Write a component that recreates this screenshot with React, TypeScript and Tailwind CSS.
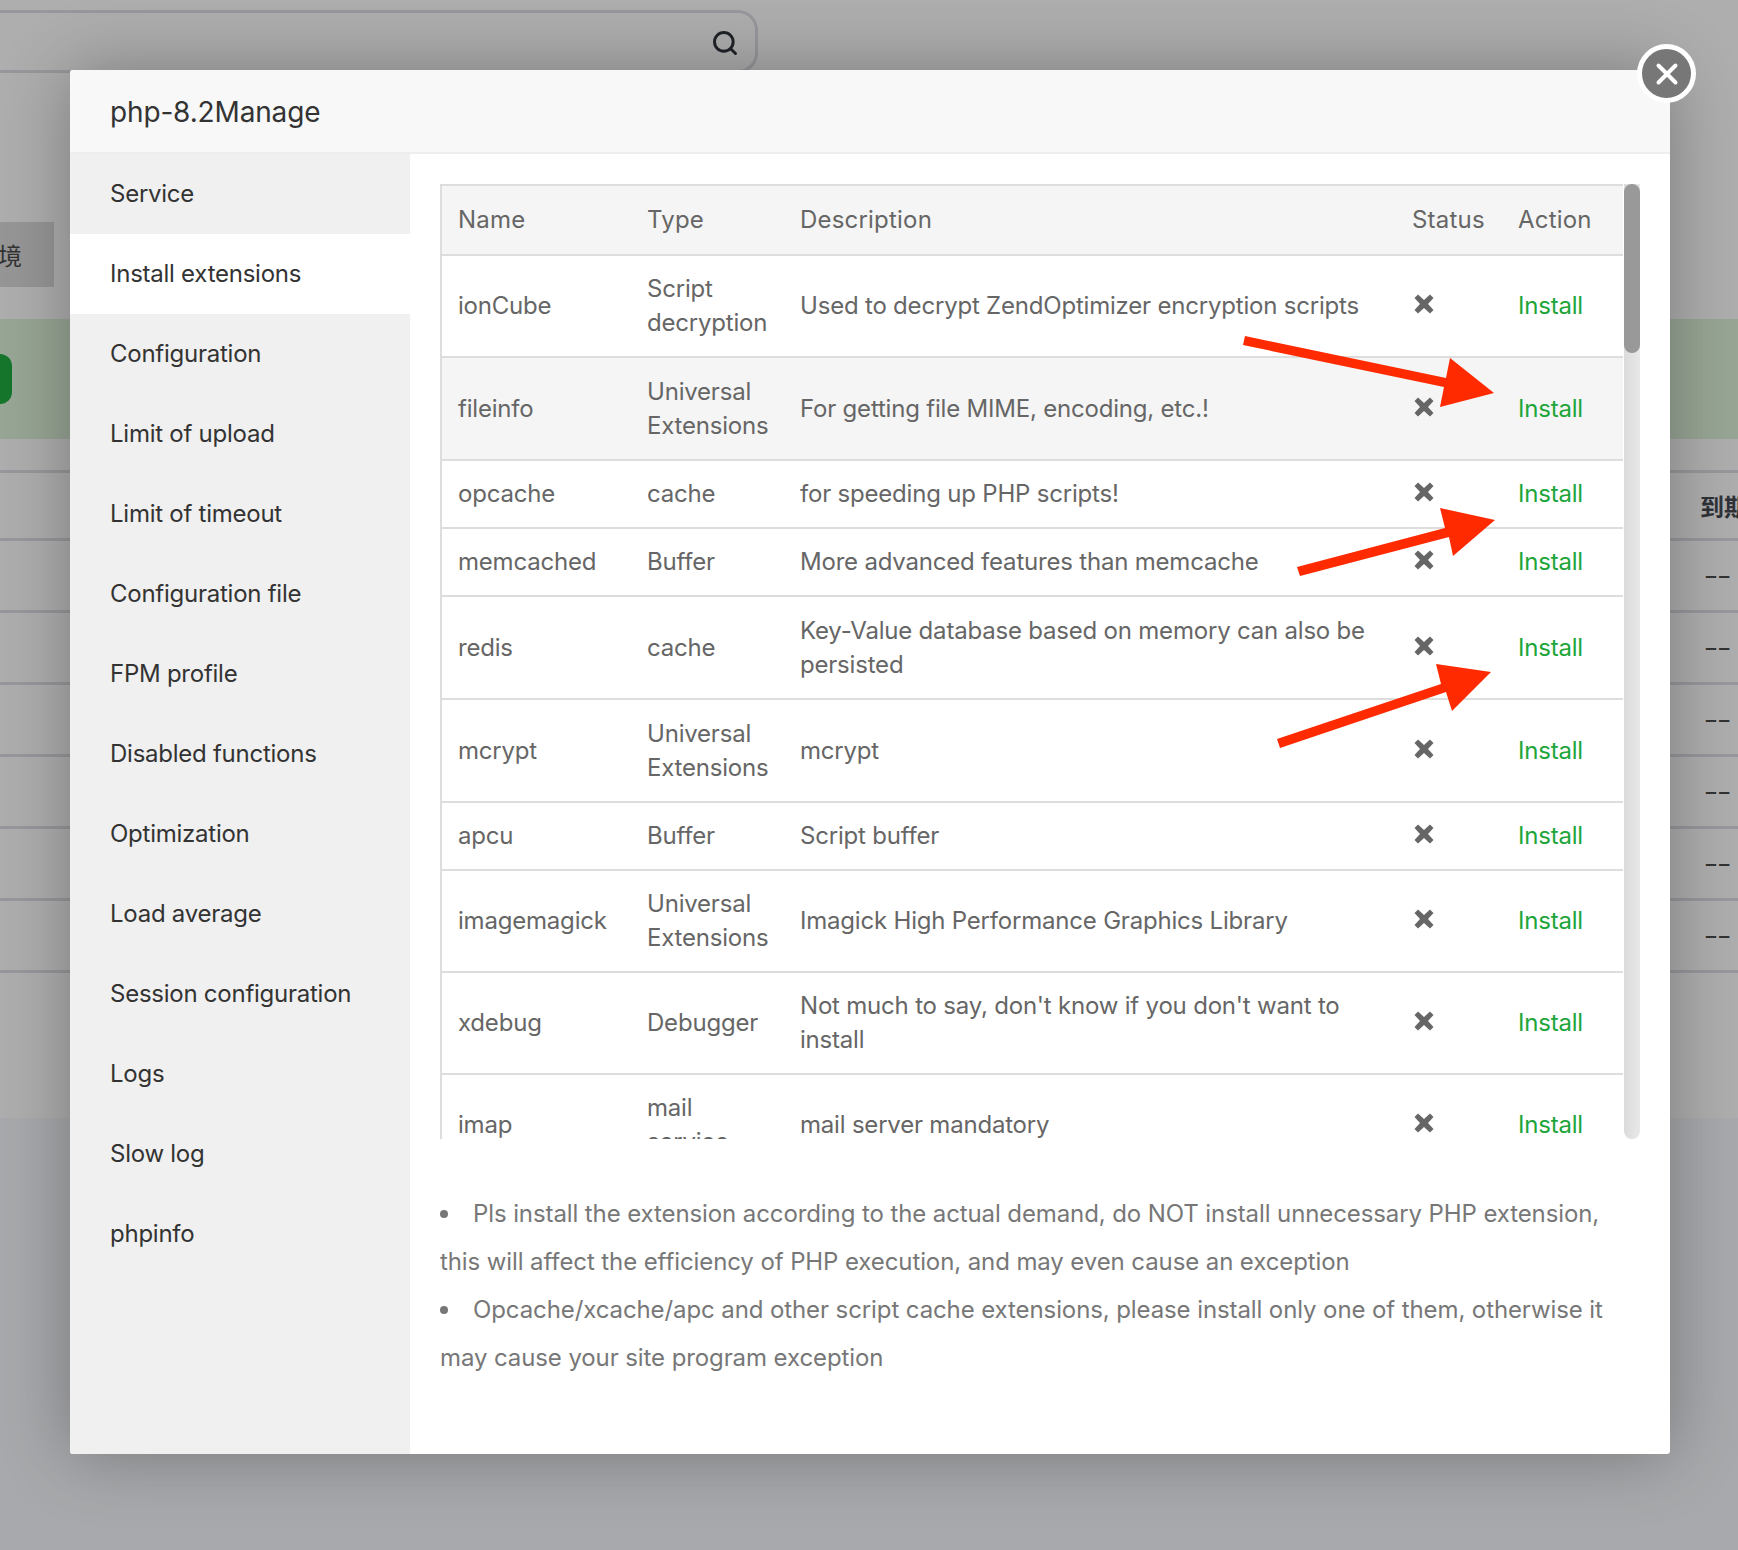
import React from 'react';
import { Search, X } from 'lucide-react';

type Extension = {
  name: string;
  type: string[];
  description: string[];
  height: string;
};

const menuItems = [
  'Service',
  'Install extensions',
  'Configuration',
  'Limit of upload',
  'Limit of timeout',
  'Configuration file',
  'FPM profile',
  'Disabled functions',
  'Optimization',
  'Load average',
  'Session configuration',
  'Logs',
  'Slow log',
  'phpinfo',
];

const extensions: Extension[] = [
  { name: 'ionCube', type: ['Script', 'decryption'], description: ['Used to decrypt ZendOptimizer encryption scripts'], height: 'h-[102px]' },
  { name: 'fileinfo', type: ['Universal', 'Extensions'], description: ['For getting file MIME, encoding, etc.!'], height: 'h-[103px]' },
  { name: 'opcache', type: ['cache'], description: ['for speeding up PHP scripts!'], height: 'h-[68px]' },
  { name: 'memcached', type: ['Buffer'], description: ['More advanced features than memcache'], height: 'h-[68px]' },
  { name: 'redis', type: ['cache'], description: ['Key-Value database based on memory can also be', 'persisted'], height: 'h-[103px]' },
  { name: 'mcrypt', type: ['Universal', 'Extensions'], description: ['mcrypt'], height: 'h-[103px]' },
  { name: 'apcu', type: ['Buffer'], description: ['Script buffer'], height: 'h-[68px]' },
  { name: 'imagemagick', type: ['Universal', 'Extensions'], description: ['Imagick High Performance Graphics Library'], height: 'h-[102px]' },
  { name: 'xdebug', type: ['Debugger'], description: ["Not much to say, don't know if you don't want to", 'install'], height: 'h-[102px]' },
  { name: 'imap', type: ['mail', 'service'], description: ['mail server mandatory'], height: 'h-[102px]' },
];

const arrows = [
  '1245,336 1243,345 1444,387 1440,407 1494,393 1450,358 1446,378',
  '1297,567 1300,576 1449,537 1453,556 1495,520 1440,508 1445,528',
  '1277,739 1280,748 1446,692 1452,711 1491,672 1436,664 1441,684',
];

function Background() {
  return (
    <div className="h-[1550px] bg-[#a8a9ac] text-[24px] text-[#333]">
      <div className="h-[1118px] bg-[#aeaeae]">
        <div className="pt-[10px]">
          <div className="flex h-[63px] w-[758px] items-center justify-end rounded-r-[20px] border-y-[3px] border-r-[3px] border-[#98989c] pr-[16px]">
            <Search className="mt-[2px] h-[28px] w-[28px] text-[#1f2328]" strokeWidth={2.5} />
          </div>
        </div>
        <div className="pt-[149px]">
          <div className="flex h-[65px] w-[54px] items-center justify-end bg-[#969696] pr-[32px] font-['Noto_Sans_CJK_SC'] whitespace-nowrap">
            境
          </div>
        </div>
        <div className="mt-[32px] flex h-[120px] items-center bg-[#98a695]">
          <div className="h-[50px] w-[12px] rounded-r-full bg-[#15762c]" />
        </div>
        <div className="h-[34px] border-b-[3px] border-[#98989c]" />
        <div className="flex h-[68px] items-center justify-end border-b-[3px] border-[#98989c] font-['Noto_Sans_CJK_SC'] font-bold text-[#2f3338]">
          <span className="w-[38px] overflow-hidden whitespace-nowrap">到期</span>
        </div>
        {[0, 1, 2, 3, 4, 5].map(row => (
          <div key={row} className="flex h-[72px] items-center justify-end border-b-[3px] border-[#98989c]">
            <span className="mr-[8px] text-[34px] font-light tracking-[-2px]">--</span>
          </div>
        ))}
      </div>
    </div>
  );
}

// same shape as the thick glyphicon cross in the status column
function RemoveIcon() {
  return (
    <svg className="-mt-[4px] ml-[2px] block h-[20px] w-[20px] text-[#666]" viewBox="0 0 20 20">
      <polygon fill="currentColor" points="4,0.5 10,6 16,0.5 19.5,4 14,10 19.5,16 16,19.5 10,14 4,19.5 0.5,16 6,10 0.5,4" />
    </svg>
  );
}

function ExtensionTable() {
  return (
    <div className="flex h-[955px] w-[1200px]">
      <div className="w-[1183px] overflow-hidden">
        <table className="w-[1183px] table-fixed border-collapse border-x-2 border-t-2 border-[#ddd] text-[24px] leading-[34px] tracking-[-0.2px] text-[#666]">
          <colgroup>
            <col className="w-[190px]" />
            <col className="w-[153px]" />
            <col className="w-[612px]" />
            <col className="w-[106px]" />
            <col className="w-[122px]" />
          </colgroup>
          <thead>
            <tr className="h-[70px] border-b-2 border-[#ddd] bg-[#f5f5f5] text-left tracking-[0.2px]">
              <th className="px-[16px] font-normal">Name</th>
              <th className="px-[16px] font-normal">Type</th>
              <th className="px-[16px] font-normal">Description</th>
              <th className="px-[16px] font-normal">Status</th>
              <th className="px-[16px] font-normal">Action</th>
            </tr>
          </thead>
          <tbody>
            {extensions.map(ext => (
              <tr key={ext.name} className={`border-b-2 border-[#ddd] ${ext.height} ${ext.name === 'fileinfo' ? 'bg-[#f5f5f5]' : ''}`}>
                <td className="px-[16px]">{ext.name}</td>
                <td className="px-[16px] whitespace-nowrap">
                  {ext.type.map(line => <div key={line}>{line}</div>)}
                </td>
                <td className="px-[16px] whitespace-nowrap">
                  {ext.description.map(line => <div key={line}>{line}</div>)}
                </td>
                <td className="px-[16px]">
                  <RemoveIcon />
                </td>
                <td className="px-[16px] text-[#20a53a]">Install</td>
              </tr>
            ))}
          </tbody>
        </table>
      </div>
      <div className="ml-[1px] h-full w-[16px] rounded-b-[8px] bg-gradient-to-r from-[#dcdcdc] to-[#e8e8e8]">
        <div className="h-[169px] rounded-[8px] bg-[#999]" />
      </div>
    </div>
  );
}

export default function App() {
  return (
    <div className="relative h-[1550px] overflow-hidden font-['Inter','Liberation_Sans',sans-serif]">
      <Background />

      <div className="absolute top-[70px] left-[70px] flex h-[1384px] w-[1600px] flex-col overflow-hidden rounded-[3px] bg-white shadow-[0_0_70px_rgba(0,0,0,0.3)]">
        <div className="flex h-[84px] shrink-0 items-center border-b-2 border-[#eee] bg-[#f8f8f8] pt-[2px] pl-[40px] text-[28px] tracking-[-0.15px] text-[#333]">
          php-8.2Manage
        </div>
        <div className="flex min-h-0 flex-1">
          <ul className="w-[340px] shrink-0 bg-[#f0f0f0] text-[24px] tracking-[-0.25px] text-[#333]">
            {menuItems.map(item => (
              <li key={item} className={`flex h-[80px] items-center pl-[40px] ${item === 'Install extensions' ? 'bg-white' : ''}`}>
                {item}
              </li>
            ))}
          </ul>
          <div className="pt-[30px] pl-[30px]">
            <ExtensionTable />
            <div className="mt-[51px] w-[1190px] text-[24px] leading-[48px] tracking-[-0.1px] whitespace-nowrap text-[#777]">
              <div className="flex items-center">
                <span className="mr-[25px] h-[8px] w-[8px] rounded-full bg-[#777]" />
                Pls install the extension according to the actual demand, do NOT install unnecessary PHP extension,
              </div>
              <div>this will affect the efficiency of PHP execution, and may even cause an exception</div>
              <div className="flex items-center">
                <span className="mr-[25px] h-[8px] w-[8px] rounded-full bg-[#777]" />
                Opcache/xcache/apc and other script cache extensions, please install only one of them, otherwise it
              </div>
              <div>may cause your site program exception</div>
            </div>
          </div>
        </div>
      </div>

      <div className="absolute top-[44px] left-[1637px] flex h-[59px] w-[59px] items-center justify-center rounded-full border-[5px] border-white bg-[#777]">
        <X className="h-[34px] w-[34px] text-white" strokeWidth={2.8} />
      </div>

      <svg className="absolute top-0 left-0" width="1738" height="1550" viewBox="0 0 1738 1550">
        {arrows.map(points => <polygon key={points} points={points} fill="#ff2a00" />)}
      </svg>
    </div>
  );
}
